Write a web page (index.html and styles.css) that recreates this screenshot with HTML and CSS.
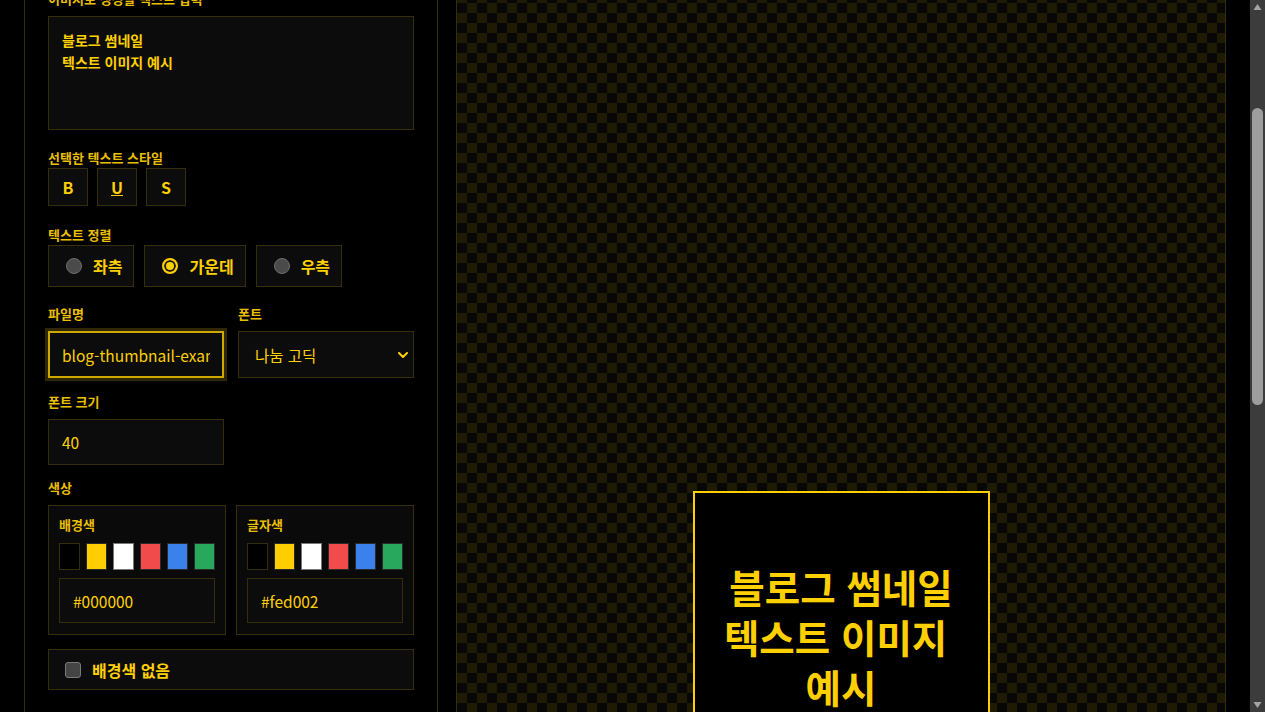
FILE: index.html
```html
<!DOCTYPE html>
<html lang="ko">
<head>
<meta charset="utf-8">
<title>블로그 썸네일 텍스트 이미지 생성기</title>
<link rel="stylesheet" href="styles.css">
</head>
<body>
<div class="page">
  <header class="app-header">
    <h1 class="app-title">블로그 썸네일 텍스트 이미지 생성기</h1>
    <p class="app-desc">텍스트를 입력하고 스타일을 고르면 바로 이미지로 저장할 수 있습니다.</p>
  </header>

  <main class="workspace">
    <section class="panel controls">
      <h2 class="panel-title">텍스트 설정</h2>

      <div class="field">
        <label class="label" for="text">이미지로 생성할 텍스트 입력</label>
        <textarea id="text" class="text-input">블로그 썸네일
텍스트 이미지 예시</textarea>
      </div>

      <div class="field field-style">
        <div class="label label-tight">선택한 텍스트 스타일</div>
        <div class="btn-row">
          <button class="style-btn">B</button>
          <button class="style-btn underline">U</button>
          <button class="style-btn">S</button>
        </div>
      </div>

      <div class="field field-align">
        <div class="label label-tight">텍스트 정렬</div>
        <div class="btn-row align-row">
          <button class="align-btn"><span class="radio"></span>좌측</button>
          <button class="align-btn"><span class="radio checked"></span>가운데</button>
          <button class="align-btn"><span class="radio"></span>우측</button>
        </div>
      </div>

      <div class="field grid-2">
        <div>
          <label class="label" for="fname">파일명</label>
          <input id="fname" class="input input-tall focused" value="blog-thumbnail-example">
        </div>
        <div>
          <label class="label" for="font">폰트</label>
          <div class="select-wrap">
            <select id="font" class="input input-tall select">
              <option>나눔 고딕</option>
              <option>나눔 명조</option>
              <option>본고딕</option>
            </select>
            <svg class="chevron" width="10" height="6" viewBox="0 0 10 6"><path d="M1 1l4 4 4-4" fill="none" stroke="#fed002" stroke-width="2" stroke-linecap="round" stroke-linejoin="round"/></svg>
          </div>
        </div>
      </div>

      <div class="field field-sm">
        <label class="label" for="size">폰트 크기</label>
        <input id="size" class="input half" value="40">
      </div>

      <div class="field field-color">
        <div class="label">색상</div>
        <div class="color-grid">
          <div class="color-box">
            <div class="label label-box">배경색</div>
            <div class="swatches">
              <span class="swatch sw-black"></span>
              <span class="swatch sw-yellow"></span>
              <span class="swatch sw-white"></span>
              <span class="swatch sw-red"></span>
              <span class="swatch sw-blue"></span>
              <span class="swatch sw-green"></span>
            </div>
            <input class="input hex" value="#000000">
          </div>
          <div class="color-box">
            <div class="label label-box">글자색</div>
            <div class="swatches">
              <span class="swatch sw-black"></span>
              <span class="swatch sw-yellow"></span>
              <span class="swatch sw-white"></span>
              <span class="swatch sw-red"></span>
              <span class="swatch sw-blue"></span>
              <span class="swatch sw-green"></span>
            </div>
            <input class="input hex" value="#fed002">
          </div>
        </div>
      </div>

      <div class="field field-xs field-gap">
        <div class="check-row"><span class="checkbox"></span>배경색 없음</div>
      </div>

      <div class="field grid-2">
        <div>
          <label class="label">여백 (px)</label>
          <input class="input input-tall" value="24">
        </div>
        <div>
          <label class="label">줄 간격</label>
          <input class="input input-tall" value="1.4">
        </div>
      </div>

      <div class="field field-sm grid-2">
        <div>
          <label class="label">이미지 너비</label>
          <input class="input" value="1080">
        </div>
        <div>
          <label class="label">이미지 높이</label>
          <input class="input" value="1080">
        </div>
      </div>

      <div class="field field-sm">
        <label class="label">외곽선 두께</label>
        <input class="input half" value="0">
      </div>

      <div class="field field-xs">
        <div class="check-row"><span class="checkbox"></span>그림자 효과</div>
      </div>

      <div class="field">
        <div class="label label-tight">이미지 비율</div>
        <div class="btn-row align-row">
          <button class="align-btn"><span class="radio checked"></span>정사각형</button>
          <button class="align-btn"><span class="radio"></span>가로형</button>
          <button class="align-btn"><span class="radio"></span>세로형</button>
        </div>
      </div>

      <div class="actions">
        <button class="primary-btn">이미지 다운로드</button>
        <button class="secondary-btn">클립보드에 복사</button>
        <button class="secondary-btn">설정 초기화</button>
      </div>

      <p class="help">PNG 형식으로 저장되며, 배경색 없음을 선택하면 투명 배경으로 저장됩니다. 미리보기는 실제 이미지 크기에 맞춰 축소되어 표시됩니다.</p>
    </section>

    <section class="panel preview">
      <div class="canvas">
        <p class="canvas-text">블로그 썸네일
텍스트 이미지 예시</p>
      </div>
    </section>
  </main>

  <footer class="footer">© 텍스트 이미지 생성기</footer>
</div>

<div class="scrollbar" aria-hidden="true">
  <svg class="sb-arrow sb-up" width="15" height="15" viewBox="0 0 15 15"><path d="M3.5 10h8l-4-6z" fill="#a3a3a3"/></svg>
  <div class="sb-thumb"></div>
  <svg class="sb-arrow sb-down" width="15" height="15" viewBox="0 0 15 15"><path d="M3.5 5h8l-4 6z" fill="#a3a3a3"/></svg>
</div>
<script src="script.js"></script>
</body>
</html>
```

FILE: styles.css
```css
* {
  box-sizing: border-box;
}

body {
  margin: 0;
  background: #000;
  color: #fed002;
  font-family: "Noto Sans CJK KR", "Noto Sans", sans-serif;
}

.page {
  padding: 24px 39px 24px 24px;
}

.app-header {
  height: 90px;
  margin-bottom: 24px;
}

.app-title {
  margin: 0 0 8px;
  font-size: 28px;
  line-height: 40px;
  font-weight: 700;
}

.app-desc {
  margin: 0;
  font-size: 14px;
  line-height: 20px;
  color: #b89a10;
}

.workspace {
  display: grid;
  grid-template-columns: 414px 1fr;
  gap: 18px;
  align-items: stretch;
}

.panel {
  border: 1px solid #362e08;
}

.controls {
  padding: 23px;
  background: #000;
}

.panel-title {
  margin: 0 0 21px;
  font-size: 18px;
  line-height: 24px;
  font-weight: 700;
}

.field {
  margin-bottom: 20px;
}

.field-style {
  margin-bottom: 21px;
}

.field-align {
  margin-bottom: 19px;
}

.field-sm {
  margin-top: -4px;
}

.field-color {
  margin-top: -5px;
}

.field-xs {
  margin-top: -6px;
}

.field-gap {
  margin-bottom: 30px;
}

.label {
  display: block;
  font-size: 13px;
  line-height: 16px;
  font-weight: 700;
  color: #e9bf00;
  margin-bottom: 9px;
}

.label-tight {
  margin-bottom: 2px;
}

.label-box {
  margin-bottom: 10px;
}

.text-input {
  display: block;
  width: 100%;
  height: 114px;
  margin: 0;
  padding: 12px 13px;
  background: #0c0c0c;
  border: 1px solid #362e08;
  color: #fed002;
  font-family: inherit;
  font-size: 14px;
  line-height: 22px;
  font-weight: 700;
  resize: none;
  outline: none;
}

.btn-row {
  display: flex;
  gap: 9px;
}

.align-row {
  gap: 10px;
}

.style-btn {
  width: 40px;
  height: 38px;
  padding: 0;
  background: #0c0c0c;
  border: 1px solid #362e08;
  color: #fed002;
  font-family: inherit;
  font-size: 16px;
  font-weight: 700;
}

.underline {
  text-decoration: underline;
}

.align-btn {
  display: flex;
  align-items: center;
  gap: 11px;
  height: 42px;
  padding: 0 11px 0 17px;
  background: #0c0c0c;
  border: 1px solid #362e08;
  color: #fed002;
  font-family: inherit;
  font-size: 16px;
  font-weight: 700;
}

.radio {
  width: 16px;
  height: 16px;
  border-radius: 50%;
  background: #4a4a4a;
  border: 1px solid #6e6e6e;
  flex: none;
}

.radio.checked {
  background: #fed002;
  border: 2px solid #fed002;
  box-shadow: inset 0 0 0 2px #1a1a1a;
}

.grid-2 {
  display: grid;
  grid-template-columns: 176px 176px;
  gap: 14px;
}

.input {
  display: block;
  width: 100%;
  height: 46px;
  margin: 0;
  padding: 0 13px;
  background: #0c0c0c;
  border: 1px solid #362e08;
  color: #fed002;
  font-family: inherit;
  font-size: 15.5px;
  outline: none;
}

.input-tall {
  height: 47px;
}

.half {
  width: 176px;
}

.focused {
  border: 2px solid #cfa900;
  padding: 0 12px;
  box-shadow: 0 0 0 3px #2e2704;
}

.select-wrap {
  position: relative;
}

.select {
  appearance: none;
  padding-left: 16px;
}

.chevron {
  position: absolute;
  right: 6px;
  top: 21px;
}

.color-grid {
  display: grid;
  grid-template-columns: 178px 178px;
  gap: 10px;
}

.color-box {
  padding: 11px 10px;
  background: #0a0a0a;
  border: 1px solid #362e08;
}

.swatches {
  display: flex;
  gap: 6px;
  margin-bottom: 8px;
}

.swatch {
  width: 21px;
  height: 27px;
  border: 1px solid #2a2a2a;
}

.sw-black { background: #000; border-color: #362e08; }
.sw-yellow { background: #fecd02; }
.sw-white { background: #fff; border-color: #777; }
.sw-red { background: #f24b4b; }
.sw-blue { background: #3a81ec; }
.sw-green { background: #27a85c; }

.hex {
  height: 45px;
}

.check-row {
  display: flex;
  align-items: center;
  gap: 11px;
  height: 41px;
  padding-left: 16px;
  background: #0c0c0c;
  border: 1px solid #362e08;
  font-size: 16px;
  font-weight: 700;
}

.checkbox {
  width: 16px;
  height: 16px;
  border-radius: 3px;
  background: #444;
  border: 1px solid #7a7a7a;
}

.actions {
  display: flex;
  flex-direction: column;
  gap: 10px;
  margin-top: 24px;
}

.primary-btn {
  height: 48px;
  background: #fed002;
  border: none;
  color: #000;
  font-family: inherit;
  font-size: 16px;
  font-weight: 700;
}

.secondary-btn {
  height: 44px;
  background: #0c0c0c;
  border: 1px solid #362e08;
  color: #fed002;
  font-family: inherit;
  font-size: 15px;
  font-weight: 700;
}

.help {
  margin: 16px 0 0;
  font-size: 12px;
  line-height: 18px;
  color: #a88c0c;
}

.preview {
  display: flex;
  align-items: center;
  justify-content: center;
  background-color: #070707;
  background-image: conic-gradient(#1e1a03 25%, transparent 0 50%, #1e1a03 0 75%, transparent 0);
  background-size: 20px 20px;
}

.canvas {
  display: flex;
  align-items: center;
  justify-content: center;
  width: 297px;
  height: 297px;
  background: #000;
  border: 2px solid #fed002;
}

.canvas-text {
  margin: 0;
  padding-bottom: 8px;
  width: 100%;
  text-align: center;
  white-space: break-spaces;
  word-break: keep-all;
  font-size: 38.5px;
  line-height: 50px;
  font-weight: 700;
  color: #fed002;
}

.footer {
  margin-top: 24px;
  font-size: 12px;
  line-height: 20px;
  color: #6b5a08;
  text-align: center;
}

.scrollbar {
  position: fixed;
  top: 0;
  right: 0;
  bottom: 0;
  width: 15px;
  background: #3c3c3c;
}

.sb-arrow {
  position: absolute;
  left: 0;
  display: block;
}

.sb-up {
  top: 0;
}

.sb-down {
  bottom: 0;
}

.sb-thumb {
  position: absolute;
  left: 2px;
  top: 108px;
  width: 11px;
  height: 297px;
  border-radius: 6px;
  background: #9e9e9e;
}
```

FILE: script.js
```js
(function () {
  function align() {
    var ta = document.querySelector('.text-input');
    if (!ta) return;
    var y = ta.getBoundingClientRect().top + window.scrollY - 16;
    window.scrollTo(0, y);
  }
  align();
  window.addEventListener('load', align);
})();
```
